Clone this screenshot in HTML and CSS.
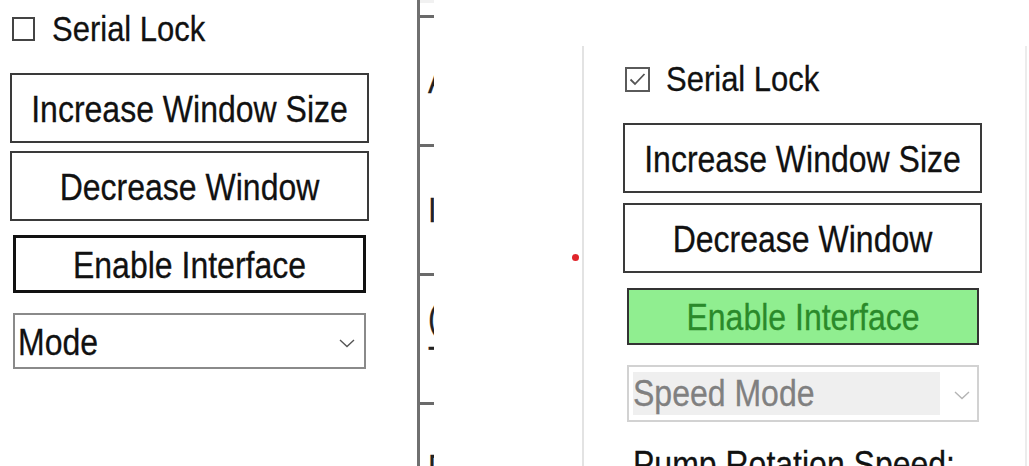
FILE: index.html
```html
<!DOCTYPE html>
<html lang="en">
<head>
<meta charset="utf-8">
<title>Pump Control</title>
<link rel="stylesheet" href="styles.css">
</head>
<body>
<div class="desk">
  <section class="panel panel-left">
    <label class="check-row">
      <span class="checkbox"></span>
      <span class="txt">Serial Lock</span>
    </label>
    <button class="btn btn-first" type="button"><span class="txt">Increase Window Size</span></button>
    <button class="btn" type="button"><span class="txt">Decrease Window</span></button>
    <button class="btn btn-enable" type="button"><span class="txt">Enable Interface</span></button>
    <div class="select">
      <span class="select-value"><span class="txt">Mode</span></span>
      <svg class="chevron" width="16" height="10" viewBox="0 0 16 10"><polyline points="1,2 8,8.5 15,2" fill="none" stroke="currentColor" stroke-width="1.4"/></svg>
    </div>
  </section>

  <div class="param-strip">
    <div class="param-row"><span class="txt">Amount</span></div>
    <div class="param-row"><span class="txt">Interval</span></div>
    <div class="param-row"><span class="txt">(ml)<br>Total</span></div>
    <div class="param-row"><span class="txt">Rate</span></div>
  </div>

  <div class="gap-area"><span class="marker"></span></div>

  <section class="panel panel-right">
    <label class="check-row check-row-on">
      <span class="checkbox checkbox-on">
        <svg width="21" height="21" viewBox="0 0 21 21"><polyline points="3.5,10.5 8,15 17.5,5" fill="none" stroke="#555" stroke-width="1.8"/></svg>
      </span>
      <span class="txt">Serial Lock</span>
    </label>
    <button class="btn btn-first" type="button"><span class="txt">Increase Window Size</span></button>
    <button class="btn" type="button"><span class="txt">Decrease Window</span></button>
    <button class="btn btn-enable btn-active" type="button"><span class="txt">Enable Interface</span></button>
    <div class="select select-disabled">
      <span class="select-value"><span class="txt">Speed Mode</span></span>
      <svg class="chevron" width="16" height="10" viewBox="0 0 16 10"><polyline points="1,2 8,8.5 15,2" fill="none" stroke="currentColor" stroke-width="1.4"/></svg>
    </div>
    <div class="field-label"><span class="txt">Pump Rotation Speed:</span></div>
  </section>
</div>
</body>
</html>
```

FILE: styles.css
```css
* {
  box-sizing: border-box;
}

html,
body {
  margin: 0;
  padding: 0;
}

body {
  width: 1029px;
  height: 466px;
  overflow: hidden;
  background: #ffffff;
  font-family: "Liberation Sans", Arial, sans-serif;
  font-size: 31px;
  color: #111111;
}

/* the UI font is drawn a little taller than it is wide */
.txt {
  display: inline-block;
  transform: scaleY(1.15);
  -webkit-text-stroke: 0.25px currentColor;
}

.desk {
  display: flex;
  height: 466px;
}

/* control panels */
.panel {
  display: flex;
  flex-direction: column;
  align-items: flex-start;
}

.panel > * {
  flex-shrink: 0;
}

.panel-left {
  width: 417px;
  padding: 11px 0 0 10px;
}

.panel-right {
  width: 445px;
  margin-top: 46px;
  padding: 15px 0 0 39px;
  border-left: 2px solid #e3e3e3;
  border-right: 2px solid #ececec;
}

/* checkbox row */
.check-row {
  display: flex;
  align-items: center;
  gap: 17px;
  height: 36px;
  margin-left: 2px;
  line-height: 36px;
}

.check-row-on {
  gap: 16px;
}

.checkbox {
  width: 23px;
  height: 24px;
  border: 2px solid #444444;
  background: #ffffff;
}

.checkbox-on {
  width: 25px;
  height: 25px;
  border-color: #5a5a5a;
}

.checkbox-on svg {
  display: block;
}

/* buttons */
.btn {
  display: flex;
  align-items: center;
  justify-content: center;
  width: 359px;
  height: 70px;
  padding: 2px 0 0;
  border: 2px solid #3a3a3a;
  background: #ffffff;
  font: 32px "Liberation Sans", Arial, sans-serif;
  color: #111111;
}

.btn-first {
  margin-top: 26px;
}

.btn + .btn {
  margin-top: 8px;
}

.panel-right .btn + .btn {
  margin-top: 10px;
}

.btn.btn-enable {
  width: 353px;
  height: 58px;
  margin: 14px 0 0 3px;
  border: 3px solid #111111;
}

.panel-right .btn.btn-active {
  width: 352px;
  height: 57px;
  margin: 15px 0 0 4px;
  border: 2px solid #333333;
  background: #90ee90;
  color: #2a8a2a;
}

/* drop-down */
.select {
  display: flex;
  align-items: center;
  width: 353px;
  height: 56px;
  margin: 20px 0 0 3px;
  padding: 2px 9px 0 3px;
  border: 2px solid #8a8a8a;
  font-size: 32px;
  color: #555555;
}

.select-value {
  flex: 1;
  color: #111111;
}

.chevron {
  display: block;
  margin-top: 2px;
}

.select-disabled {
  width: 352px;
  height: 57px;
  margin-left: 4px;
  padding: 5px 7px 5px 4px;
  border-color: #d2d2d2;
  color: #b4b4b4;
}

.select-disabled .select-value {
  flex: 0 0 307px;
  height: 100%;
  margin-right: auto;
  display: flex;
  align-items: center;
  background: #efefef;
  color: #808080;
}

.field-label {
  margin: 24px 0 0 10px;
  font-size: 32px;
  line-height: 36px;
  white-space: nowrap;
}

/* parameter column peeking in at the divider */
.param-strip {
  display: flex;
  flex-direction: column;
  width: 17px;
  padding-top: 15px;
  border-left: 3px solid #707070;
  overflow: hidden;
  background: linear-gradient(#f1f1f1 0 3px, #ffffff 3px);
}

.param-row {
  display: flex;
  align-items: center;
  flex: 0 0 129px;
  padding-left: 8px;
  border-top: 3px solid #6a6a6a;
  white-space: nowrap;
  line-height: 36px;
  color: #222222;
}

/* white gap with the status marker */
.gap-area {
  display: flex;
  justify-content: flex-end;
  width: 148px;
  padding: 254px 3px 0 0;
}

.marker {
  width: 7px;
  height: 7px;
  border-radius: 50%;
  background: #e0252b;
}
```
